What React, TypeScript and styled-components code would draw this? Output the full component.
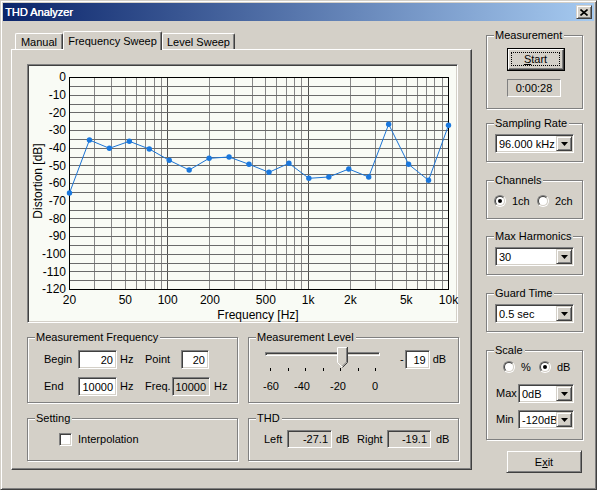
import React from "react";
import styled, { createGlobalStyle, css } from "styled-components";

const FACE = "#d4d0c8";
const SHADOW = "#808080";
const DARK = "#404040";

const Global = createGlobalStyle`
  html, body { margin: 0; padding: 0; background: ${FACE}; }
  body { font-family: "Liberation Sans", Arial, sans-serif; }
  * { box-sizing: border-box; }
`;

const sunken2 = css`
  border: 1px solid;
  border-color: ${SHADOW} #fff #fff ${SHADOW};
  box-shadow: inset 1px 1px 0 ${DARK}, inset -1px -1px 0 ${FACE};
`;

const raised2 = css`
  border: 1px solid;
  border-color: ${FACE} ${DARK} ${DARK} ${FACE};
  box-shadow: inset 1px 1px 0 #fff, inset -1px -1px 0 ${SHADOW};
`;

const Window = styled.div`
  width: 597px;
  height: 490px;
  background: ${FACE};
  border: 1px solid;
  border-color: ${FACE} ${DARK} ${DARK} ${FACE};
  box-shadow: inset 1px 1px 0 #fff, inset -1px -1px 0 ${SHADOW};
  padding: 2px;
  display: flex;
  flex-direction: column;
  font-family: "Liberation Sans", Arial, sans-serif;
  font-size: 11px;
  color: #000;
  overflow: hidden;
`;

const Caption = styled.div`
  height: 18px;
  flex: none;
  background: linear-gradient(to right, #0a246a, #a6caf0);
  display: flex;
  align-items: center;
  justify-content: space-between;
  padding: 0 2px 0 2px;
`;

const CaptionTitle = styled.span`
  color: #fff;
  font-weight: normal;
  font-size: 11px;
  line-height: 13px;
  text-shadow: 0.4px 0 0 #fff;
`;

const CloseButton = styled.div`
  width: 16px;
  height: 14px;
  background: ${FACE};
  ${raised2};
  display: flex;
  align-items: center;
  justify-content: center;
`;

const Body = styled.div`
  flex: 1;
  display: flex;
  padding: 10px 0 0 8px;
`;

const TabArea = styled.div`
  width: 461px;
  display: flex;
  flex-direction: column;
`;

const TabStrip = styled.div`
  height: 18px;
  display: flex;
  align-items: flex-end;
  padding-left: 4px;
`;

const Tab = styled.div<{ $w: number; $active?: boolean }>`
  width: ${(p) => p.$w}px;
  height: ${(p) => (p.$active ? 19 : 16)}px;
  margin-bottom: ${(p) => (p.$active ? -1 : 0)}px;
  position: relative;
  z-index: ${(p) => (p.$active ? 1 : 0)};
  background: ${FACE};
  border-top: 1px solid #fff;
  border-left: 1px solid #fff;
  border-right: 1px solid ${DARK};
  box-shadow: inset -1px 0 0 ${SHADOW};
  border-radius: 2px 2px 0 0;
  display: flex;
  align-items: center;
  justify-content: center;
  padding-bottom: ${(p) => (p.$active ? 1 : 0)}px;
  white-space: nowrap;
`;

const TabPanel = styled.div`
  width: 461px;
  height: 421px;
  border: 1px solid;
  border-color: #fff ${DARK} ${DARK} #fff;
  box-shadow: inset -1px -1px 0 ${SHADOW};
  padding: 14px 0 0 15px;
  display: flex;
  flex-direction: column;
`;

const ChartBox = styled.div`
  width: 431px;
  height: 259px;
  ${sunken2};
  background: #f9fbf5;
  padding: 2px;
`;

const ChartSvg = styled.svg`
  display: block;
  overflow: visible;
  font-family: "Liberation Sans", Arial, sans-serif;
  font-size: 12px;
`;

const GroupRow = styled.div<{ $mt: number }>`
  display: flex;
  gap: 10px;
  margin-top: ${(p) => p.$mt}px;
`;

const Group = styled.div<{ $w: number; $h: number; $mt?: number }>`
  width: ${(p) => p.$w}px;
  height: ${(p) => p.$h}px;
  margin-top: ${(p) => p.$mt ?? 0}px;
  flex: none;
  border: 1px solid ${SHADOW};
  box-shadow: inset 1px 1px 0 #fff, 1px 1px 0 #fff;
  display: flex;
  flex-direction: column;
`;

const GroupTitle = styled.div`
  align-self: flex-start;
  margin: -7px 0 0 7px;
  padding: 0 2px 0 1px;
  height: 13px;
  line-height: 13px;
  background: ${FACE};
  white-space: nowrap;
`;

const FieldRow = styled.div<{ $mt: number; $pl: number; $h?: number }>`
  display: flex;
  align-items: center;
  height: ${(p) => p.$h ?? 19}px;
  margin-top: ${(p) => p.$mt}px;
  padding-left: ${(p) => p.$pl}px;
`;

const Txt = styled.span<{ $w?: number; $ml?: number }>`
  flex: none;
  display: inline-block;
  white-space: nowrap;
  width: ${(p) => (p.$w ? `${p.$w}px` : "auto")};
  margin-left: ${(p) => p.$ml ?? 0}px;
  line-height: 13px;
`;

const Edit = styled.div<{ $w: number; $h?: number; $ro?: boolean; $ml?: number }>`
  flex: none;
  width: ${(p) => p.$w}px;
  height: ${(p) => p.$h ?? 19}px;
  margin-left: ${(p) => p.$ml ?? 0}px;
  ${sunken2};
  background: ${(p) => (p.$ro ? FACE : "#fff")};
  display: flex;
  align-items: center;
  justify-content: flex-end;
  padding-right: 3px;
  white-space: nowrap;
`;

const LevelBody = styled.div`
  display: flex;
  align-items: flex-start;
  margin-top: 3px;
  padding-left: 16px;
`;

const Slider = styled.div`
  width: 116px;
  display: flex;
  flex-direction: column;
`;

const SliderRail = styled.div`
  position: relative;
  height: 21px;
`;

const Track = styled.div`
  margin-top: 5px;
  height: 4px;
  width: 115px;
  ${sunken2};
  background: ${FACE};
`;

const Thumb = styled.svg`
  position: absolute;
  top: 0;
  display: block;
`;

const Ticks = styled.div`
  display: flex;
  justify-content: space-between;
  padding: 0 5px;
  height: 4px;
  margin-top: -1px;
`;

const Tick = styled.span`
  width: 1px;
  height: 3px;
  margin-top: 1px;
  background: #000;
`;

const TickLabels = styled.div`
  display: flex;
  height: 13px;
  margin-top: 9px;
  line-height: 13px;
`;

const TickLabel = styled.span<{ $ml: number }>`
  flex: none;
  width: 20px;
  text-align: center;
  margin-left: ${(p) => p.$ml}px;
`;

const LevelEntry = styled.div`
  display: flex;
  align-items: center;
  height: 19px;
  margin-top: 3px;
`;

const CheckRow = styled.div<{ $mt: number; $pl: number }>`
  display: flex;
  align-items: center;
  height: 13px;
  margin-top: ${(p) => p.$mt}px;
  padding-left: ${(p) => p.$pl}px;
`;

const CheckBox = styled.span`
  flex: none;
  width: 13px;
  height: 13px;
  ${sunken2};
  background: #fff;
`;

const Side = styled.div`
  width: 97px;
  margin-left: 14px;
  display: flex;
  flex-direction: column;
`;

const DefaultButton = styled.div<{ $w: number; $h: number; $mt: number; $ml: number }>`
  width: ${(p) => p.$w}px;
  height: ${(p) => p.$h}px;
  margin: ${(p) => p.$mt}px 0 0 ${(p) => p.$ml}px;
  border: 1px solid #000;
  display: flex;
`;

const Bevel = styled.div`
  flex: 1;
  display: flex;
  border: 1px solid;
  border-color: #fff ${DARK} ${DARK} #fff;
  box-shadow: inset -1px -1px 0 ${SHADOW};
  padding: 2px 3px 3px 2px;
`;

const FocusRect = styled.div`
  flex: 1;
  border: 1px dotted #000;
  display: flex;
  align-items: center;
  justify-content: center;
`;

const PushButton = styled.div<{ $w: number; $h: number; $mt: number; $ml: number }>`
  width: ${(p) => p.$w}px;
  height: ${(p) => p.$h}px;
  margin: ${(p) => p.$mt}px 0 0 ${(p) => p.$ml}px;
  ${raised2};
  display: flex;
  align-items: center;
  justify-content: center;
`;

const Underline = styled.span`
  text-decoration: underline;
  text-underline-offset: 1px;
`;

const StaticBox = styled.div<{ $w: number; $h: number; $mt: number; $ml: number }>`
  width: ${(p) => p.$w}px;
  height: ${(p) => p.$h}px;
  margin: ${(p) => p.$mt}px 0 0 ${(p) => p.$ml}px;
  border: 1px solid;
  border-color: ${SHADOW} #fff #fff ${SHADOW};
  display: flex;
  align-items: center;
  justify-content: center;
`;

const Combo = styled.div<{ $w: number; $mt?: number; $ml?: number }>`
  flex: none;
  width: ${(p) => p.$w}px;
  height: 19px;
  margin: ${(p) => p.$mt ?? 0}px 0 0 ${(p) => p.$ml ?? 0}px;
  ${sunken2};
  background: #fff;
  padding: 1px;
  display: flex;
  align-items: stretch;
`;

const ComboText = styled.span`
  flex: 1;
  display: flex;
  align-items: center;
  padding-left: 2px;
  white-space: nowrap;
  overflow: hidden;
`;

const ComboButton = styled.div`
  width: 16px;
  flex: none;
  background: ${FACE};
  ${raised2};
  display: flex;
  align-items: center;
  justify-content: center;
`;

const RadioRow = styled.div<{ $mt: number; $pl: number }>`
  display: flex;
  align-items: center;
  height: 12px;
  margin-top: ${(p) => p.$mt}px;
  padding-left: ${(p) => p.$pl}px;
`;

const RadioOption = styled.div<{ $w?: number }>`
  display: flex;
  align-items: center;
  flex: none;
  width: ${(p) => (p.$w ? `${p.$w}px` : "auto")};
`;

const RadioOuter = styled.span`
  flex: none;
  width: 12px;
  height: 12px;
  border-radius: 50%;
  border: 1px solid;
  border-color: ${SHADOW} #fff #fff ${SHADOW};
  display: flex;
`;

const RadioInner = styled.span<{ $on?: boolean }>`
  flex: 1;
  border-radius: 50%;
  border: 1px solid;
  border-color: ${DARK} ${FACE} ${FACE} ${DARK};
  background: #fff;
  display: flex;
  align-items: center;
  justify-content: center;
  &::after {
    content: "";
    width: 4px;
    height: 4px;
    border-radius: 50%;
    background: ${(p) => (p.$on ? "#000" : "transparent")};
  }
`;

const RadioLabel = styled.span`
  margin-left: 6px;
  line-height: 13px;
  white-space: nowrap;
`;

/* ---------- Chart ---------- */

const CW = 427;
const CH = 255;
const X0 = 39;
const X1 = 418;
const Y0 = 10;
const Y1 = 222;
const fx = (f: number) => X0 + ((X1 - X0) * Math.log10(f / 20)) / Math.log10(500);
const fy = (db: number) => Y0 + ((Y1 - Y0) * -db) / 120;
const snap = (v: number) => Math.round(v) + 0.5;

const gridFreqs: number[] = [];
for (let d = 10; d <= 1000; d *= 10) {
  for (let m = 1; m <= 9; m++) {
    const f = m * d;
    if (f > 20 && f < 10000) gridFreqs.push(f);
  }
}

const data = [
  -65.66, -35.66, -40.36, -36.4, -40.75, -47.15, -52.64, -46.02, -45.28, -49.42,
  -53.94, -48.85, -57.34, -56.6, -52.08, -56.6, -26.77, -49.42, -58.47, -27.34,
];

const xLabels: [number, string][] = [
  [20, "20"],
  [50, "50"],
  [100, "100"],
  [200, "200"],
  [500, "500"],
  [1000, "1k"],
  [2000, "2k"],
  [5000, "5k"],
  [10000, "10k"],
];

function Chart() {
  const pts = data.map((db, i) => [X0 + ((X1 - X0) * i) / 19 + 0.5, fy(db)] as [number, number]);
  const hLines: number[] = [];
  for (let db = -5; db > -120; db -= 5) hLines.push(db);
  const yLabels: number[] = [];
  for (let db = 0; db >= -120; db -= 10) yLabels.push(db);
  return (
    <ChartSvg width={CW} height={CH} viewBox={`0 0 ${CW} ${CH}`}>
      {gridFreqs.map((f) => {
        const x = snap(fx(f));
        const decade = f === 100 || f === 1000;
        return (
          <line key={`v${f}`} x1={x} x2={x} y1={Y0} y2={Y1} stroke={decade ? "#505050" : "#888"} strokeWidth={1} />
        );
      })}
      {hLines.map((db) => {
        const y = snap(fy(db));
        return <line key={`h${db}`} x1={X0} x2={X1} y1={y} y2={y} stroke="#6a6a6a" strokeWidth={1} />;
      })}
      <rect x={X0 + 0.5} y={Y0 + 0.5} width={X1 - X0} height={Y1 - Y0} fill="none" stroke="#000" strokeWidth={1} />
      <polyline points={pts.map((p) => p.join(",")).join(" ")} fill="none" stroke="#1c74d4" strokeWidth={1} />
      {pts.map((p, i) => (
        <circle key={i} cx={p[0]} cy={p[1]} r={2.7} fill="#1a78de" />
      ))}
      {yLabels.map((db) => (
        <text key={`yl${db}`} x={36} y={fy(db) + 4.3} textAnchor="end" fill="#000">
          {db}
        </text>
      ))}
      {xLabels.map(([f, t]) => (
        <text key={`xl${f}`} x={fx(f) + 0.5} y={237.3} textAnchor="middle" fill="#000">
          {t}
        </text>
      ))}
      <text x={228} y={252.3} textAnchor="middle" fill="#000">
        Frequency [Hz]
      </text>
      <text x={0} y={0} transform="translate(12.3,114) rotate(-90)" textAnchor="middle" fill="#000">
        Distortion [dB]
      </text>
    </ChartSvg>
  );
}

function DropArrow() {
  return (
    <svg width="7" height="4" viewBox="0 0 7 4" style={{ display: "block" }}>
      <polygon points="0,0 7,0 3.5,4" fill="#000" />
    </svg>
  );
}

function ComboBox({ w, value, mt, ml }: { w: number; value: string; mt?: number; ml?: number }) {
  return (
    <Combo $w={w} $mt={mt} $ml={ml}>
      <ComboText>{value}</ComboText>
      <ComboButton>
        <DropArrow />
      </ComboButton>
    </Combo>
  );
}

function Radio({ label, on, w }: { label: string; on?: boolean; w?: number }) {
  return (
    <RadioOption $w={w}>
      <RadioOuter>
        <RadioInner $on={on} />
      </RadioOuter>
      <RadioLabel>{label}</RadioLabel>
    </RadioOption>
  );
}

function LevelSlider({ value }: { value: number }) {
  const center = 5 + ((60 + value) / 60) * 105;
  const left = Math.round(center - 4.5);
  return (
    <Slider>
      <SliderRail>
        <Track />
        <Thumb width="11" height="21" viewBox="0 0 11 21" style={{ left }}>
          <polygon points="0.5,0.5 10.5,0.5 10.5,15.5 5.5,20.5 0.5,15.5" fill={FACE} />
          <polyline points="0.5,15.5 0.5,0.5 9.5,0.5" fill="none" stroke="#fff" />
          <polyline points="10.5,0 10.5,15.5 5.5,20.5" fill="none" stroke={DARK} />
          <polyline points="9.5,1 9.5,15 5.5,19" fill="none" stroke={SHADOW} />
          <polyline points="0.5,15.5 5,20" fill="none" stroke="#fff" />
        </Thumb>
      </SliderRail>
      <Ticks>
        {Array.from({ length: 7 }).map((_, i) => (
          <Tick key={i} />
        ))}
      </Ticks>
      <TickLabels>
        <TickLabel $ml={-4}>-60</TickLabel>
        <TickLabel $ml={11}>-40</TickLabel>
        <TickLabel $ml={16}>-20</TickLabel>
        <TickLabel $ml={17}>0</TickLabel>
      </TickLabels>
    </Slider>
  );
}

export default function App() {
  return (
    <>
      <Global />
      <Window>
        <Caption>
          <CaptionTitle>THD Analyzer</CaptionTitle>
          <CloseButton>
            <svg width="8" height="7" viewBox="0 0 8 7" style={{ display: "block" }}>
              <path d="M0.5 0.5 L7.5 6.5 M7.5 0.5 L0.5 6.5" stroke="#000" strokeWidth="1.6" fill="none" />
            </svg>
          </CloseButton>
        </Caption>
        <Body>
          <TabArea>
            <TabStrip>
              <Tab $w={48}>Manual</Tab>
              <Tab $w={99} $active>
                Frequency Sweep
              </Tab>
              <Tab $w={73}>Level Sweep</Tab>
            </TabStrip>
            <TabPanel>
              <ChartBox>
                <Chart />
              </ChartBox>
              <GroupRow $mt={14}>
                <Group $w={211} $h={66}>
                  <GroupTitle>Measurement Frequency</GroupTitle>
                  <FieldRow $mt={6} $pl={16}>
                    <Txt $w={34}>Begin</Txt>
                    <Edit $w={39}>20</Edit>
                    <Txt $w={25} $ml={3}>
                      Hz
                    </Txt>
                    <Txt $w={36}>Point</Txt>
                    <Edit $w={28}>20</Edit>
                  </FieldRow>
                  <FieldRow $mt={8} $pl={16}>
                    <Txt $w={34}>End</Txt>
                    <Edit $w={39}>10000</Edit>
                    <Txt $w={25} $ml={3}>
                      Hz
                    </Txt>
                    <Txt $w={27}>Freq.</Txt>
                    <Edit $w={38} $ro>
                      10000
                    </Edit>
                    <Txt $ml={4}>Hz</Txt>
                  </FieldRow>
                </Group>
                <Group $w={211} $h={66}>
                  <GroupTitle>Measurement Level</GroupTitle>
                  <LevelBody>
                    <LevelSlider value={-19} />
                    <LevelEntry>
                      <Txt $ml={19}>-</Txt>
                      <Edit $w={25} $ml={1}>
                        19
                      </Edit>
                      <Txt $ml={3}>dB</Txt>
                    </LevelEntry>
                  </LevelBody>
                </Group>
              </GroupRow>
              <GroupRow $mt={15}>
                <Group $w={211} $h={43}>
                  <GroupTitle>Setting</GroupTitle>
                  <CheckRow $mt={8} $pl={31}>
                    <CheckBox />
                    <Txt $ml={6}>Interpolation</Txt>
                  </CheckRow>
                </Group>
                <Group $w={211} $h={43}>
                  <GroupTitle>THD</GroupTitle>
                  <FieldRow $mt={5} $pl={15} $h={18}>
                    <Txt $w={23}>Left</Txt>
                    <Edit $w={45} $h={18} $ro>
                      -27.1
                    </Edit>
                    <Txt $w={21} $ml={4}>
                      dB
                    </Txt>
                    <Txt $w={30}>Right</Txt>
                    <Edit $w={44} $h={18} $ro>
                      -19.1
                    </Edit>
                    <Txt $ml={5}>dB</Txt>
                  </FieldRow>
                </Group>
              </GroupRow>
            </TabPanel>
          </TabArea>
          <Side>
            <Group $w={97} $h={74} $mt={4}>
              <GroupTitle>Measurement</GroupTitle>
              <DefaultButton $w={58} $h={23} $mt={6} $ml={20}>
                <Bevel>
                  <FocusRect>
                    <span>
                      <Underline>S</Underline>tart
                    </span>
                  </FocusRect>
                </Bevel>
              </DefaultButton>
              <StaticBox $w={54} $h={18} $mt={8} $ml={20}>
                0:00:28
              </StaticBox>
            </Group>
            <Group $w={97} $h={39} $mt={14}>
              <GroupTitle>Sampling Rate</GroupTitle>
              <ComboBox w={79} value="96.000 kHz" mt={4} ml={8} />
            </Group>
            <Group $w={97} $h={39} $mt={18}>
              <GroupTitle>Channels</GroupTitle>
              <RadioRow $mt={8} $pl={7}>
                <Radio label="1ch" on w={43} />
                <Radio label="2ch" />
              </RadioRow>
            </Group>
            <Group $w={97} $h={39} $mt={17}>
              <GroupTitle>Max Harmonics</GroupTitle>
              <ComboBox w={79} value="30" mt={4} ml={8} />
            </Group>
            <Group $w={97} $h={39} $mt={18}>
              <GroupTitle>Guard Time</GroupTitle>
              <ComboBox w={79} value="0.5 sec" mt={4} ml={8} />
            </Group>
            <Group $w={97} $h={90} $mt={18}>
              <GroupTitle>Scale</GroupTitle>
              <RadioRow $mt={4} $pl={16}>
                <Radio label="%" w={36} />
                <Radio label="dB" on />
              </RadioRow>
              <FieldRow $mt={11} $pl={9}>
                <Txt $w={22}>Max</Txt>
                <ComboBox w={56} value="0dB" />
              </FieldRow>
              <FieldRow $mt={7} $pl={9}>
                <Txt $w={22}>Min</Txt>
                <ComboBox w={56} value="-120dB" />
              </FieldRow>
            </Group>
            <PushButton $w={76} $h={23} $mt={10} $ml={20}>
              <span>
                E<Underline>x</Underline>it
              </span>
            </PushButton>
          </Side>
        </Body>
      </Window>
    </>
  );
}
